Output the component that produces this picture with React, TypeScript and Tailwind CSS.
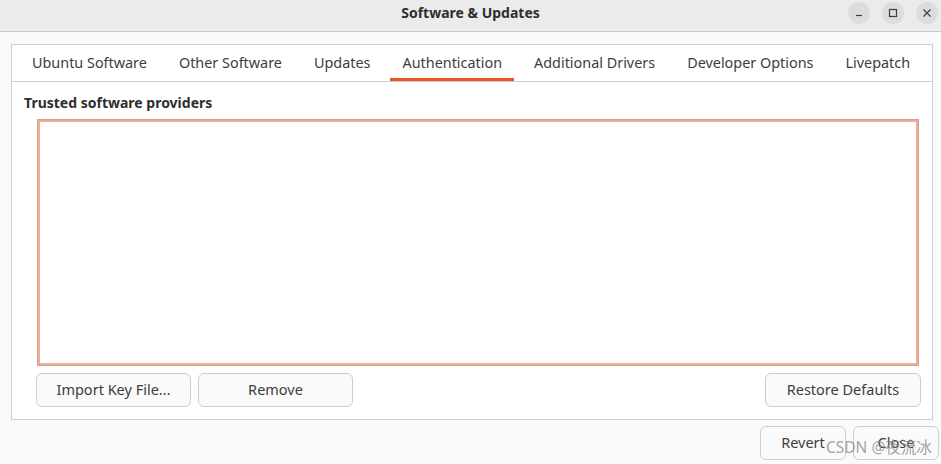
const font = { fontFamily: '"Noto Sans", "Open Sans", sans-serif' };

function WinButton({ children }: { children: React.ReactNode }) {
  return (
    <div className="flex h-[22px] w-[22px] items-center justify-center rounded-full bg-[#dcdcdc] text-[#3d3d3d]">
      {children}
    </div>
  );
}

function Button({ label, className = "" }: { label: string; className?: string }) {
  return (
    <div
      className={`flex h-[34px] items-center justify-center rounded-[6px] border border-[#cdcdcd] bg-[#fafafa] text-[14.5px] text-[#3d3d3d] ${className}`}
    >
      {label}
    </div>
  );
}

const tabs = [
  "Ubuntu Software",
  "Other Software",
  "Updates",
  "Authentication",
  "Additional Drivers",
  "Developer Options",
  "Livepatch",
];

export default function App() {
  return (
    <div className="relative flex h-[464px] w-[941px] flex-col overflow-hidden bg-[#fafafa]" style={font}>
      {/* Title bar */}
      <div className="relative flex h-[32px] flex-shrink-0 items-center justify-center border-b border-[#c9c9c9] bg-[#ebebeb] pb-[6px]">
        <span className="text-[14px] font-bold text-[#2e2e2e]">Software &amp; Updates</span>
        <div className="absolute right-[3px] top-[2px] flex items-center gap-[12px]">
          <WinButton>
            <svg width="10" height="10" viewBox="0 0 10 10">
              <path d="M2 7.5h6" stroke="currentColor" strokeWidth="1.2" />
            </svg>
          </WinButton>
          <WinButton>
            <svg width="10" height="10" viewBox="0 0 10 10">
              <rect x="1.5" y="1.5" width="7" height="7" fill="none" stroke="currentColor" strokeWidth="1.2" />
            </svg>
          </WinButton>
          <WinButton>
            <svg width="10" height="10" viewBox="0 0 10 10">
              <path d="M1.5 1.5l7 7M8.5 1.5l-7 7" stroke="currentColor" strokeWidth="1.2" />
            </svg>
          </WinButton>
        </div>
      </div>

      {/* Notebook */}
      <div className="ml-[11px] mt-[12px] flex h-[376px] w-[922px] flex-col border border-[#cdcdcd] bg-white">
        <div className="flex h-[37px] flex-shrink-0 items-stretch gap-[8px] border-b border-[#cdcdcd] pl-[8px]">
          {tabs.map((t) => (
            <div
              key={t}
              className={`flex items-center px-[12px] text-[14.4px] text-[#3d3d3d] ${
                t === "Authentication" ? "border-b-[3px] border-[#e95420] pt-[3px]" : ""
              }`}
            >
              {t}
            </div>
          ))}
        </div>

        <div className="flex flex-1 flex-col px-[12px]">
          <div className="mt-[12px] text-[14px] font-bold leading-[18px] text-[#2e2e2e]">
            Trusted software providers
          </div>
          <div className="ml-[13px] mr-[1px] mt-[7px] h-[247px] border border-[#c9a496]">
            <div className="h-full w-full border-2 border-[#f3ab94] bg-white" />
          </div>
          <div className="ml-[12px] mr-[-1px] mt-[7px] flex gap-[7px]">
            <Button label="Import Key File..." className="w-[155px]" />
            <Button label="Remove" className="w-[155px]" />
            <Button label="Restore Defaults" className="ml-auto w-[156px]" />
          </div>
        </div>
      </div>

      {/* Dialog buttons */}
      <div className="mr-[2px] mt-[6px] flex justify-end gap-[7px]">
        <Button label="Revert" className="w-[86px]" />
        <Button label="Close" className="w-[86px]" />
      </div>

      {/* Watermark */}
      <div
        className="pointer-events-none absolute left-[826px] top-[436px] text-[15.5px] text-[#8c8c8c]/80"
        style={{ fontFamily: '"Noto Sans", "Noto Sans CJK SC", sans-serif' }}
      >
        CSDN @夜流冰
      </div>
    </div>
  );
}
